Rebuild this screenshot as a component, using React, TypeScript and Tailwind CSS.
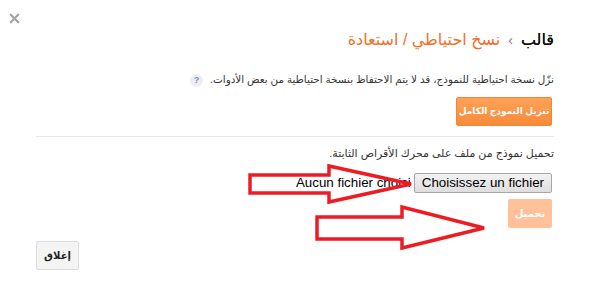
import { X } from 'lucide-react';

export default function App() {
  return (
    <div className="relative w-[592px] h-[302px] bg-white overflow-hidden font-['Liberation_Sans','DejaVu_Sans',sans-serif] text-[#222]">
      <button className="absolute left-[7px] top-[11px] text-[#a4a4a4]">
        <X size={15} strokeWidth={3.6} />
      </button>

      <div dir="rtl" className="pl-[36px] pr-[38px] pt-[30px]">
        <h1 className="flex items-center gap-[8px] text-[16px] leading-[20px]">
          <span className="text-[#111] [text-shadow:0_0_0.4px_#111]">قالب</span>
          <span className="text-[#777] text-[14px]">›</span>
          <span className="text-[#f36d25]">نسخ احتياطي / استعادة</span>
        </h1>

        <div className="mt-[23px] flex items-center gap-[7px] text-[10.4px] leading-[14px] text-[#333]">
          <span>نزّل نسخة احتياطية للنموذج، قد لا يتم الاحتفاظ بنسخة احتياطية من بعض الأدوات.</span>
          <span className="w-[13px] h-[13px] rounded-full bg-[#eeeeee] text-[#6b8fd6] text-[9px] font-bold flex items-center justify-center">?</span>
        </div>

        <div className="mt-[10px] flex pr-[2px]">
          <button className="h-[29px] w-[96px] whitespace-nowrap rounded-[2px] border border-[#f08537] bg-gradient-to-b from-[#fea257] to-[#f88a39] text-white text-[9px] font-bold">
            تنزيل النموذج الكامل
          </button>
        </div>

        <div className="mt-[10px] h-px bg-[#e8e8e8]" />

        <p className="mt-[9px] text-[11px] leading-[14px] text-[#333]">
          تحميل نموذج من ملف على محرك الأقراص الثابتة.
        </p>

        <div className="mt-[13px] flex items-center gap-[3px] pr-[2px]">
          <span className="h-[20px] px-[7px] rounded-[2px] border border-[#a6a6a6] bg-gradient-to-b from-[#f3f3f3] to-[#dedede] text-black text-[13.33px] leading-[18px] font-['Liberation_Sans',sans-serif]" dir="ltr">
            Choisissez un fichier
          </span>
          <span className="text-black text-[13.33px] font-['Liberation_Sans',sans-serif]" dir="ltr">Aucun fichier choisi</span>
        </div>

        <div className="mt-[6px] flex pr-[2px]">
          <button className="h-[29px] w-[44px] rounded-[2px] bg-[#ffc09a] text-white text-[10px] font-bold">
            تحميل
          </button>
        </div>

        <div className="mt-[13px] flex justify-end">
          <button className="h-[29px] w-[43px] rounded-[2px] border border-[#dcdcdc] bg-[#f4f4f4] text-[#222] text-[10px] font-bold">
            إغلاق
          </button>
        </div>
      </div>

      <svg className="absolute inset-0 pointer-events-none" width="592" height="302" viewBox="0 0 592 302">
        <polygon
          points="250,175 329,175 329,166 411,184 329,202 329,193 250,193"
          fill="none"
          stroke="#ed1c24"
          strokeWidth="3.5"
          strokeLinejoin="miter"
        />
        <polygon
          points="317,217 402,217 402,207 484,228 402,248 402,239 317,239"
          fill="none"
          stroke="#ed1c24"
          strokeWidth="3.5"
          strokeLinejoin="miter"
        />
      </svg>
    </div>
  );
}
